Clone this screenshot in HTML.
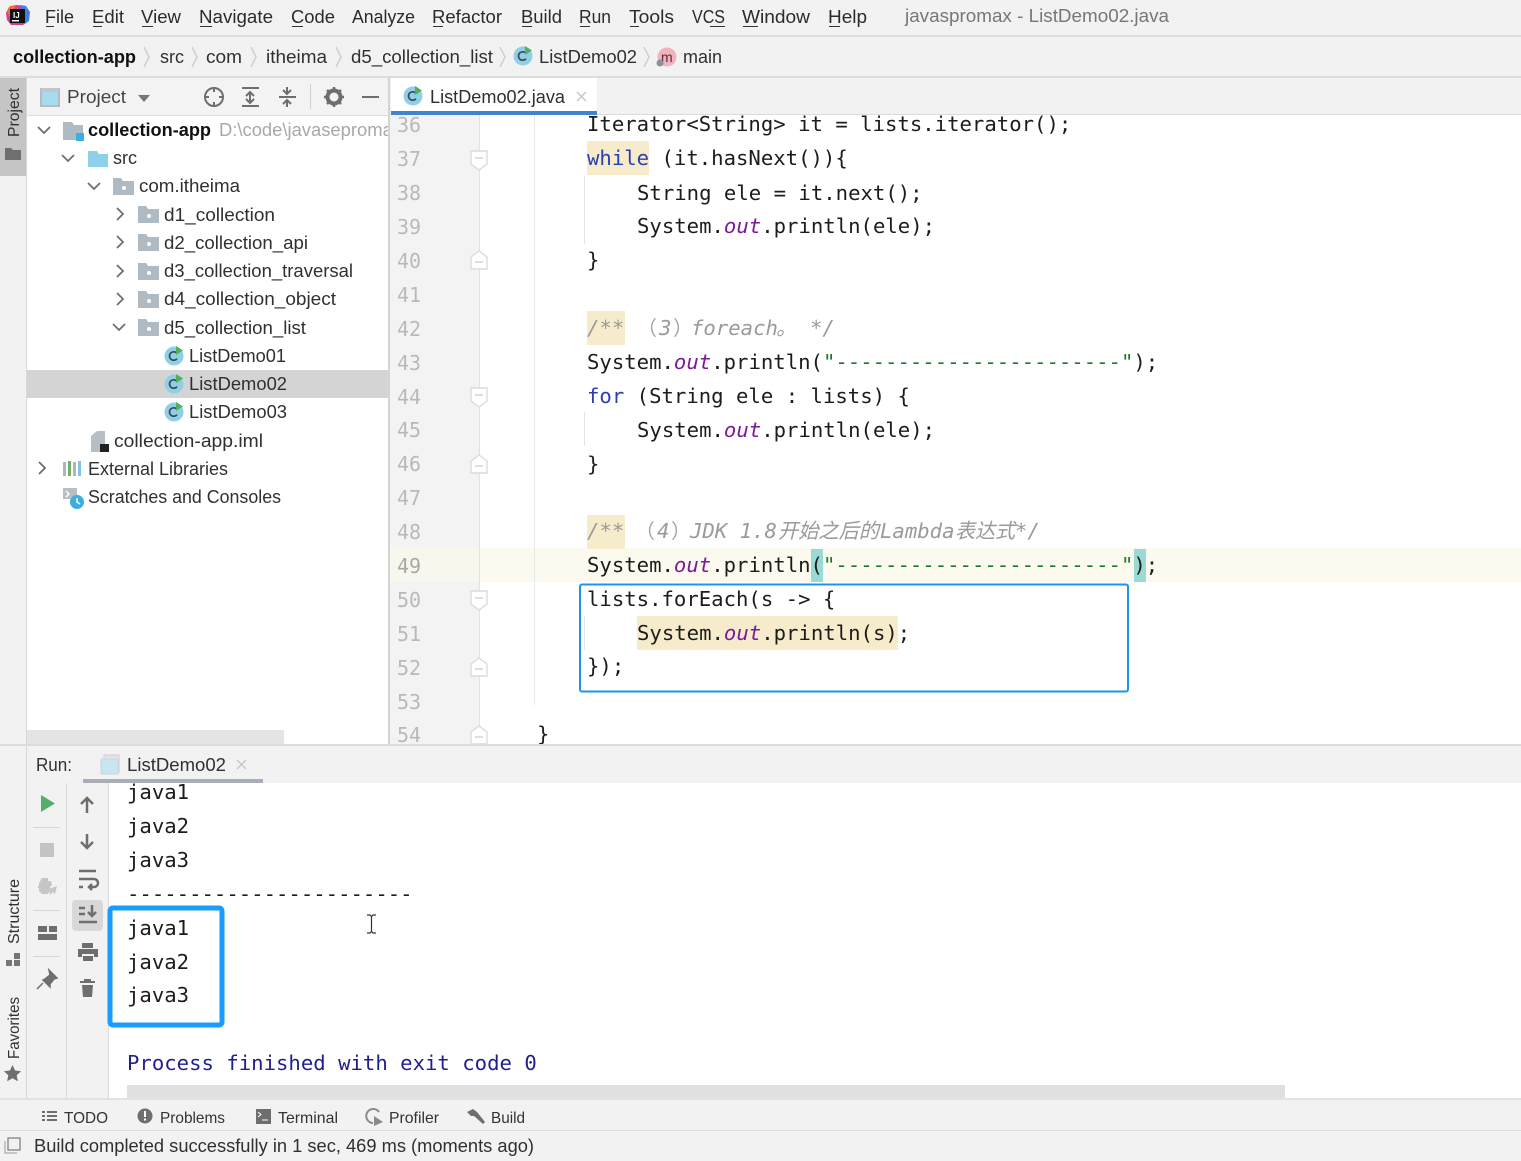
<!DOCTYPE html>
<html><head><meta charset="utf-8"><title>ListDemo02.java</title>
<style>
html,body{margin:0;padding:0;background:#fff;width:1521px;height:1161px;overflow:hidden}
svg{display:block;filter:blur(.35px)}
.u{font-family:"Liberation Sans","Noto Sans CJK SC",sans-serif;font-size:18px;fill:#2b2b2b}
.t{font-family:"Liberation Sans",sans-serif;font-size:18px;fill:#303030}
.b{font-weight:bold;fill:#111}
.s{font-size:16px;fill:#333}
.m{font-family:"DejaVu Sans Mono","Liberation Mono",monospace;font-size:20.63px;fill:#1c1c1c;white-space:pre}
.n{font-family:"DejaVu Sans Mono","Liberation Mono",monospace;font-size:20px;fill:#b9b9b9}
.k{fill:#2c3fae}.o{fill:#7d1a98;font-style:italic}.g{fill:#1c7a2e}
.c{font-family:"DejaVu Sans Mono","Noto Sans CJK SC",monospace;font-size:20.63px;font-style:italic;fill:#9a9a9a;white-space:pre}
.f{font-family:"Noto Sans CJK SC",sans-serif;font-size:20px;fill:#a5a5a5}
.p{fill:#1f1f8f}
</style></head><body>
<svg width="1521" height="1161" viewBox="0 0 1521 1161" xmlns="http://www.w3.org/2000/svg">
<defs>
<g id="cls"><circle cx="10" cy="10" r="9.500" fill="#8fd0e6"/><path d="M13 7.400A4.200 4.200 0 1 0 13 12.600" fill="none" stroke="#3d4a52" stroke-width="1.700"/><path d="M12 0v9l7-4.500z" fill="#4fae5f"/></g>
<g id="pkg"><path d="M0 1h8l2 3h11v14H0z" fill="#b0bac2"/><circle cx="11" cy="11" r="2" fill="#fff"/></g>
<path id="ch" d="M0 0l6 6 6-6" fill="none" stroke="#6f6f6f" stroke-width="1.800"/>
<path id="cr" d="M0 0l6 6-6 6" fill="none" stroke="#6f6f6f" stroke-width="1.800"/>
<g id="fo"><path d="M1 1h16v13l-8 6-8-6z" fill="#fff" stroke="#dcdcdc" stroke-width="1.400"/><path d="M5 8h8" stroke="#cfcfcf" stroke-width="1.400"/></g>
<g id="fc"><path d="M1 19V7l8-6 8 6v12z" fill="#fff" stroke="#dcdcdc" stroke-width="1.400"/><path d="M5 12h8" stroke="#cfcfcf" stroke-width="1.400"/></g>
<clipPath id="treeclip"><rect x="27" y="116" width="361" height="30"/></clipPath>
</defs>

<!-- backgrounds -->
<rect width="1521" height="1161" fill="#fff"/>
<rect width="1521" height="35" fill="#f2f2f2"/>
<rect y="35" width="1521" height="2" fill="#dedede"/>
<rect y="37" width="1521" height="40" fill="#f2f2f2"/>
<rect y="76" width="1521" height="2" fill="#dcdcdc"/>
<rect y="78" width="26" height="1022" fill="#f2f2f2"/>
<rect x="0" y="78" width="26" height="98" fill="#c5c5c5"/>
<rect x="26" y="78" width="1" height="1022" fill="#d8d8d8"/>
<rect x="27" y="78" width="361" height="37" fill="#f3f3f3"/>
<rect x="27" y="115" width="361" height="1" fill="#dedede"/>
<rect x="388" y="78" width="2" height="667" fill="#d4d4d4"/>
<rect x="390" y="78" width="1131" height="37" fill="#f2f2f2"/>
<rect x="391" y="78" width="206" height="33" fill="#fff"/>
<rect x="391" y="111" width="206" height="4" fill="#3f84d0"/>
<rect x="597" y="114" width="924" height="1" fill="#dcdcdc"/>

<!-- logo + menu -->
<path d="M9 7l8-2 8 1 4 6-1 9-5 4H11l-4-5-1-7z" fill="#d93a8c"/><path d="M20 5l6 1 4 6-1 9-4 3z" fill="#3f7fe6"/><path d="M7 12l3-6 6-1-6 12z" fill="#f0703a"/>
<rect x="10" y="9" width="15" height="14" fill="#111"/><rect x="12" y="20" width="7" height="1.500" fill="#fff"/>
<text x="13" y="18" font-family="Liberation Sans" font-weight="bold" font-size="8" fill="#fff">IJ</text>
<g class="u">
<text x="45" y="23" textLength="29" lengthAdjust="spacingAndGlyphs">File</text><rect x="46" y="26" width="8" height="1" fill="#333"/>
<text x="92" y="23" textLength="32" lengthAdjust="spacingAndGlyphs">Edit</text><rect x="93" y="26" width="9" height="1" fill="#333"/>
<text x="141" y="23" textLength="40" lengthAdjust="spacingAndGlyphs">View</text><rect x="142" y="26" width="11" height="1" fill="#333"/>
<text x="199" y="23" textLength="74" lengthAdjust="spacingAndGlyphs">Navigate</text><rect x="200" y="26" width="12" height="1" fill="#333"/>
<text x="291" y="23" textLength="44" lengthAdjust="spacingAndGlyphs">Code</text><rect x="292" y="26" width="11" height="1" fill="#333"/>
<text x="352" y="23" textLength="63" lengthAdjust="spacingAndGlyphs">Analyze</text>
<text x="432" y="23" textLength="70" lengthAdjust="spacingAndGlyphs">Refactor</text><rect x="433" y="26" width="10" height="1" fill="#333"/>
<text x="521" y="23" textLength="41" lengthAdjust="spacingAndGlyphs">Build</text><rect x="522" y="26" width="10" height="1" fill="#333"/>
<text x="579" y="23" textLength="32" lengthAdjust="spacingAndGlyphs">Run</text><rect x="580" y="26" width="10" height="1" fill="#333"/>
<text x="629" y="23" textLength="45" lengthAdjust="spacingAndGlyphs">Tools</text><rect x="630" y="26" width="9" height="1" fill="#333"/>
<text x="692" y="23" textLength="33" lengthAdjust="spacingAndGlyphs">VCS</text><rect x="710" y="26" width="15" height="1" fill="#333"/>
<text x="742" y="23" textLength="68" lengthAdjust="spacingAndGlyphs">Window</text><rect x="743" y="26" width="15" height="1" fill="#333"/>
<text x="828" y="23" textLength="39" lengthAdjust="spacingAndGlyphs">Help</text><rect x="829" y="26" width="11" height="1" fill="#333"/>
<text x="905" y="22" textLength="264" lengthAdjust="spacingAndGlyphs" style="fill:#777">javaspromax - ListDemo02.java</text>
</g>

<!-- breadcrumb -->
<g class="t">
<text class="t b" x="13" y="63" textLength="123" lengthAdjust="spacingAndGlyphs">collection-app</text>
<text x="160" y="63" textLength="24" lengthAdjust="spacingAndGlyphs">src</text>
<text x="206" y="63" textLength="36" lengthAdjust="spacingAndGlyphs">com</text>
<text x="266" y="63" textLength="61" lengthAdjust="spacingAndGlyphs">itheima</text>
<text x="351" y="63" textLength="142" lengthAdjust="spacingAndGlyphs">d5_collection_list</text>
<text x="539" y="63" textLength="98" lengthAdjust="spacingAndGlyphs">ListDemo02</text>
<text x="683" y="63" textLength="39" lengthAdjust="spacingAndGlyphs">main</text>
</g>
<g fill="none" stroke="#cfcfcf" stroke-width="1.500">
<path d="M144 47l5 10-5 10M192 47l5 10-5 10M251 47l5 10-5 10M336 47l5 10-5 10M500 47l5 10-5 10M644 47l5 10-5 10"/>
</g>
<use href="#cls" x="513" y="46"/>
<circle cx="667" cy="57" r="9.500" fill="#f0b3bd"/><text x="661" y="62" font-family="Liberation Sans" font-size="14" fill="#5a2f38">m</text>
<circle cx="660" cy="63" r="3.500" fill="#8b929a"/>

<!-- left strip -->
<text transform="translate(19,137) rotate(-90)" class="t" style="font-size:16px" textLength="49" lengthAdjust="spacingAndGlyphs">Project</text>
<path d="M5 148h6l2 2h8v10H5z" fill="#6f6f6f"/>
<text transform="translate(19,944) rotate(-90)" class="t" style="font-size:16px" textLength="65" lengthAdjust="spacingAndGlyphs">Structure</text>
<path d="M6 960h6v6H6zM14 953h6v6h-6zM14 960h6v6h-6z" fill="#757575"/>
<text transform="translate(19,1059) rotate(-90)" class="t" style="font-size:16px" textLength="62" lengthAdjust="spacingAndGlyphs">Favorites</text>
<path d="M12.500 1065l2.600 5.500 6 .8-4.400 4 1.200 6-5.400-3-5.400 3 1.200-6-4.400-4 6-.8z" fill="#6f6f6f"/>

<!-- project header -->
<rect x="41" y="89" width="18" height="17" fill="#a9dbee" stroke="#b5bcc1" stroke-width="2"/><rect x="41" y="88" width="18" height="4" fill="#c0c6ca"/>
<text x="67" y="103" class="t" style="fill:#444" textLength="59" lengthAdjust="spacingAndGlyphs">Project</text>
<path d="M138 95h12l-6 7z" fill="#777"/>
<g fill="none" stroke="#6e6e6e" stroke-width="2">
<circle cx="214" cy="97" r="9"/><path d="M204 97h5M219 97h5M214 87v5M214 102v5"/>
<path d="M242 88h17M242 106h17M250 92v11"/><path d="M246 96l4-4 4 4M246 99l4 4 4-4"/>
<path d="M279 97h17M287 87v6M287 101v6"/><path d="M283 90l4 4 4-4M283 104l4-4 4 4"/>
</g>
<rect x="310" y="84" width="1" height="25" fill="#d0d0d0"/>
<circle cx="334" cy="97" r="6.500" fill="none" stroke="#6e6e6e" stroke-width="4"/><path d="M334 87v4M334 103v4M324 97h4M340 97h4M327 90l3 3M338 101l3 3M341 90l-3 3M330 101l-3 3" stroke="#6e6e6e" stroke-width="2.500"/>
<rect x="362" y="96" width="17" height="2" fill="#6e6e6e"/>

<!-- tree -->
<rect x="27" y="370" width="361" height="28" fill="#d4d4d4"/>
<use href="#ch" x="38" y="127"/>
<path d="M63 122h9l2 3h9v15H63z" fill="#b0bac2"/><rect x="76" y="133" width="8" height="8" fill="#3bb0de"/>
<text class="t b" x="88" y="136" textLength="123" lengthAdjust="spacingAndGlyphs">collection-app</text>
<g clip-path="url(#treeclip)"><text x="219" y="136" class="t" style="fill:#a8a8a8" textLength="183" lengthAdjust="spacingAndGlyphs">D:\code\javasepromax</text></g>
<use href="#ch" x="62" y="155"/>
<path d="M88 151h9l2 3h9v13H88z" fill="#8dd0ea"/>
<text x="113" y="164" class="t" textLength="24" lengthAdjust="spacingAndGlyphs">src</text>
<use href="#ch" x="88" y="183"/><use href="#pkg" x="113" y="177"/>
<text x="139" y="192" class="t" textLength="101" lengthAdjust="spacingAndGlyphs">com.itheima</text>
<use href="#cr" x="117" y="208"/><use href="#pkg" x="138" y="205"/>
<text x="164" y="221" class="t" textLength="111" lengthAdjust="spacingAndGlyphs">d1_collection</text>
<use href="#cr" x="117" y="236"/><use href="#pkg" x="138" y="233"/>
<text x="164" y="249" class="t" textLength="144" lengthAdjust="spacingAndGlyphs">d2_collection_api</text>
<use href="#cr" x="117" y="265"/><use href="#pkg" x="138" y="262"/>
<text x="164" y="277" class="t" textLength="189" lengthAdjust="spacingAndGlyphs">d3_collection_traversal</text>
<use href="#cr" x="117" y="293"/><use href="#pkg" x="138" y="290"/>
<text x="164" y="305" class="t" textLength="172" lengthAdjust="spacingAndGlyphs">d4_collection_object</text>
<use href="#ch" x="113" y="324"/><use href="#pkg" x="138" y="318"/>
<text x="164" y="334" class="t" textLength="142" lengthAdjust="spacingAndGlyphs">d5_collection_list</text>
<use href="#cls" x="164" y="346"/><text x="189" y="362" class="t" textLength="97" lengthAdjust="spacingAndGlyphs">ListDemo01</text>
<use href="#cls" x="164" y="374"/><text x="189" y="390" class="t" textLength="98" lengthAdjust="spacingAndGlyphs">ListDemo02</text>
<use href="#cls" x="164" y="402"/><text x="189" y="418" class="t" textLength="98" lengthAdjust="spacingAndGlyphs">ListDemo03</text>
<path d="M91 436l6-5h8v16h4v5H91z" fill="#b7bfc5"/><rect x="100" y="444" width="9" height="8" fill="#222"/>
<text x="114" y="447" class="t" textLength="149" lengthAdjust="spacingAndGlyphs">collection-app.iml</text>
<use href="#cr" x="39" y="462"/>
<path d="M63 462h3v14h-3z" fill="#aeb6bc"/><path d="M68 461h3v15h-3z" fill="#6fb06a"/><path d="M73 462h3v14h-3z" fill="#aeb6bc"/><path d="M78 461h3v15h-3z" fill="#7fc5e0"/>
<text x="88" y="475" class="t" textLength="140" lengthAdjust="spacingAndGlyphs">External Libraries</text>
<path d="M63 488h14v11H63z" fill="#b7bfc5"/><path d="M66 491l3 3-3 3" stroke="#fff" stroke-width="1.500" fill="none"/>
<circle cx="77" cy="502" r="7" fill="#3bb0de"/><path d="M77 498v4l3 2" stroke="#fff" stroke-width="1.500" fill="none"/>
<text x="88" y="503" class="t" textLength="193" lengthAdjust="spacingAndGlyphs">Scratches and Consoles</text>
<rect x="27" y="730" width="257" height="14" fill="#e4e4e4"/>

<!-- editor tab -->
<use href="#cls" x="403" y="86"/>
<text x="430" y="103" class="t" textLength="135" lengthAdjust="spacingAndGlyphs">ListDemo02.java</text>
<path d="M577 92l9 9M586 92l-9 9" stroke="#c8c8c8" stroke-width="1.500"/>

<!-- gutter -->
<rect x="390" y="115" width="89" height="630" fill="#f3f3f3"/>
<rect x="479" y="115" width="1042" height="630" fill="#fff"/>
<rect x="390" y="548" width="1131" height="34" fill="#fcfaee"/>
<rect x="390" y="548" width="89" height="34" fill="#f8f7ee"/>
<rect x="479" y="115" width="1" height="630" fill="#e2e2e2"/>
<rect x="534" y="115" width="1" height="590" fill="#e8e8e8"/>
<g fill="#e4e4e4"><rect x="584" y="176" width="1" height="68"/><rect x="584" y="412" width="1" height="34"/><rect x="584" y="616" width="1" height="34"/></g>
<g class="n">
<text x="397" y="132">36</text><text x="397" y="166">37</text><text x="397" y="200">38</text><text x="397" y="234">39</text><text x="397" y="268">40</text><text x="397" y="302">41</text><text x="397" y="336">42</text><text x="397" y="370">43</text><text x="397" y="404">44</text><text x="397" y="437">45</text><text x="397" y="471">46</text><text x="397" y="505">47</text><text x="397" y="539">48</text><text x="397" y="573" style="fill:#a8a8a8">49</text><text x="397" y="607">50</text><text x="397" y="641">51</text><text x="397" y="675">52</text><text x="397" y="709">53</text><text x="397" y="742">54</text>
</g>
<use href="#fo" x="470" y="150"/><use href="#fc" x="470" y="250"/><use href="#fo" x="470" y="387"/><use href="#fc" x="470" y="454"/><use href="#fo" x="470" y="590"/><use href="#fc" x="470" y="657"/><use href="#fc" x="470" y="725"/>

<!-- highlights -->
<g fill="#f6ebca">
<rect x="587" y="141" width="62" height="34"/>
<rect x="587" y="311" width="38" height="34"/>
<rect x="587" y="515" width="38" height="34"/>
<rect x="637" y="616" width="261" height="34"/>
</g>
<rect x="811" y="549" width="12" height="33" fill="#9adad4"/>
<rect x="1134" y="549" width="12" height="33" fill="#9adad4"/>

<!-- code -->
<g class="m">
<text x="587" y="131">Iterator&lt;String&gt; it = lists.iterator();</text>
<text x="587" y="165"><tspan class="k">while</tspan> (it.hasNext()){</text>
<text x="637" y="200">String ele = it.next();</text>
<text x="637" y="233">System.<tspan class="o">out</tspan>.println(ele);</text>
<text x="587" y="267">}</text>
<text x="587" y="369">System.<tspan class="o">out</tspan>.println(<tspan class="g">"-----------------------"</tspan>);</text>
<text x="587" y="403"><tspan class="k">for</tspan> (String ele : lists) {</text>
<text x="637" y="437">System.<tspan class="o">out</tspan>.println(ele);</text>
<text x="587" y="471">}</text>
<text x="587" y="572">System.<tspan class="o">out</tspan>.println(<tspan class="g">"-----------------------"</tspan>);</text>
<text x="587" y="606">lists.forEach(s -&gt; {</text>
<text x="637" y="640">System.<tspan class="o">out</tspan>.println(s);</text>
<text x="587" y="673">});</text>
<text x="537" y="741">}</text>
</g>
<text class="f" x="637" y="335">（</text><text class="f" x="673" y="335">）</text>
<text class="f" x="635" y="538">（</text><text class="f" x="671" y="538">）</text>
<g class="c">
<text x="587" y="335">/**</text>
<text x="659" y="335">3</text>
<text x="691" y="335">foreach</text>
<text x="776" y="335">。</text>
<text x="810" y="335">*/</text>
<text x="587" y="538">/**</text>
<text x="657" y="538">4</text>
<text x="690" y="538">JDK 1.8</text>
<text x="778" y="538" textLength="101" lengthAdjust="spacingAndGlyphs">开始之后的</text>
<text x="880" y="538">Lambda</text>
<text x="955" y="538" textLength="60" lengthAdjust="spacingAndGlyphs">表达式</text>
<text x="1015" y="538">*/</text>
</g>
<rect x="580" y="584.500" width="548" height="107" rx="2" fill="none" stroke="#1b94f0" stroke-width="2"/>

<!-- run panel -->
<rect y="744" width="1521" height="2" fill="#dcdcdc"/>
<rect x="27" y="746" width="1494" height="37" fill="#f2f2f2"/>
<text x="36" y="771" class="t" textLength="36" lengthAdjust="spacingAndGlyphs">Run:</text>
<rect x="104" y="755" width="15" height="17" fill="#e4e4e4" stroke="#cfcfcf"/><rect x="101" y="759" width="17" height="15" fill="#c9e5f1" stroke="#cfd4d8"/>
<text x="127" y="771" class="t" textLength="99" lengthAdjust="spacingAndGlyphs">ListDemo02</text>
<path d="M237 760l9 9M246 760l-9 9" stroke="#c8c8c8" stroke-width="1.500"/>
<rect x="83" y="779" width="180" height="4" fill="#a9adb8"/>
<rect x="27" y="783" width="81" height="317" fill="#f2f2f2"/>
<rect x="66" y="783" width="1" height="317" fill="#dadada"/>
<rect x="108" y="783" width="1" height="317" fill="#dadada"/>
<path d="M41 795l14 8.500-14 8.500z" fill="#55ad6b"/>
<g fill="#d6d6d6"><rect x="33" y="827" width="27" height="1"/><rect x="33" y="910" width="27" height="1"/><rect x="33" y="956" width="27" height="1"/></g>
<rect x="40" y="843" width="14" height="14" fill="#c4c4c4"/>
<path d="M42 878h6v3h3l1 4-2 2v3l-2 4H42l-3-3v-3h-1v-2h1v-3z" fill="#c6c6c6"/><path d="M49 889l8-3-2 8-2-2-3 3z" fill="#c6c6c6"/>
<path d="M38 926h9v6h-9zM49 926h8v6h-8zM38 934h19v6H38z" fill="#6e6e6e"/>
<path d="M49 970l8 8-3 1-4 5v3l-7-7 2-1 5-4zM43 983l-6 6" fill="#6e6e6e" stroke="#6e6e6e" stroke-width="1.500"/>
<g fill="none" stroke="#6e6e6e" stroke-width="2.500">
<path d="M87 813v-15M81 804l6-6 6 6"/>
<path d="M87 834v14M81 842l6 6 6-6"/>
<path d="M79 871h17M79 879h15a3.500 3.500 0 0 1 0 8h-5M92 884l-3 3 3 3M79 887h4"/>
</g>
<rect x="72" y="900" width="31" height="31" rx="4" fill="#d8d8d8"/>
<g fill="none" stroke="#6e6e6e" stroke-width="2.500"><path d="M79 922h18M79 908h6M79 914h6M92 905v11M88 912l4 4 4-4"/></g>
<path d="M82 943h11v5h-11zM78 949h20v8h-4v-3H82v3h-4zM83 956h10v5H83z" fill="#6e6e6e"/>
<path d="M84 979h7v2h4v2H80v-2h4zM82 985h11l-1 12H83z" fill="#6e6e6e"/>

<!-- console -->
<g class="m">
<text x="127" y="799">java1</text><text x="127" y="833">java2</text><text x="127" y="867">java3</text>
<text x="127" y="901">-----------------------</text>
<text x="127" y="935">java1</text><text x="127" y="969">java2</text><text x="127" y="1002">java3</text>
<text x="127" y="1070" class="p" style="fill:#1f1f8f">Process finished with exit code 0</text>
</g>
<rect x="110" y="908" width="112" height="117" rx="3" fill="none" stroke="#1a9bff" stroke-width="5"/>
<path d="M367 915h3l1.500 1.500L373 915h3M371.500 916v16M367 933h3l1.500-1.500L373 933h3" fill="none" stroke="#333" stroke-width="1.200"/>
<rect x="127" y="1085" width="1158" height="13" fill="#e0e0e0"/>

<!-- bottom bars -->
<rect y="1098" width="1521" height="2" fill="#e2e2e2"/>
<rect y="1100" width="1521" height="31" fill="#f2f2f2"/>
<rect y="1130" width="1521" height="1" fill="#dcdcdc"/>
<rect y="1131" width="1521" height="30" fill="#f2f2f2"/>
<path d="M42 1111h3v2h-3zM47 1111h10v2H47zM42 1115h3v2h-3zM47 1115h10v2H47zM42 1119h3v2h-3zM47 1119h10v2H47z" fill="#6e6e6e"/>
<text x="64" y="1123" class="t s" textLength="44" lengthAdjust="spacingAndGlyphs">TODO</text>
<circle cx="145" cy="1116" r="7.500" fill="#6e6e6e"/><rect x="144" y="1111" width="2" height="6" fill="#fff"/><rect x="144" y="1118.500" width="2" height="2" fill="#fff"/>
<text x="160" y="1123" class="t s" textLength="65" lengthAdjust="spacingAndGlyphs">Problems</text>
<rect x="256" y="1109" width="15" height="15" fill="#6e6e6e"/><path d="M258 1112l3 2.500-3 2.500M262 1120h6" stroke="#fff" fill="none"/>
<text x="278" y="1123" class="t s" textLength="60" lengthAdjust="spacingAndGlyphs">Terminal</text>
<path d="M379 1112a7 7 0 1 0-6 11" fill="none" stroke="#8a8a8a" stroke-width="2"/><path d="M374 1116l9 6-9 4z" fill="#8a8a8a"/>
<text x="389" y="1123" class="t s" textLength="50" lengthAdjust="spacingAndGlyphs">Profiler</text>
<path d="M467 1112l6-3 4 3 8 10-2 2-9-8-3 0z" fill="#6e6e6e"/>
<text x="491" y="1123" class="t s" textLength="34" lengthAdjust="spacingAndGlyphs">Build</text>
<rect x="8" y="1138" width="12" height="12" fill="#f2f2f2" stroke="#7b7b7b" stroke-width="1.200"/><path d="M5 1141v12h12" fill="none" stroke="#aaa" stroke-width="1.200"/>
<text x="34" y="1152" class="t" textLength="500" lengthAdjust="spacingAndGlyphs">Build completed successfully in 1 sec, 469 ms (moments ago)</text>
</svg>
</body></html>
